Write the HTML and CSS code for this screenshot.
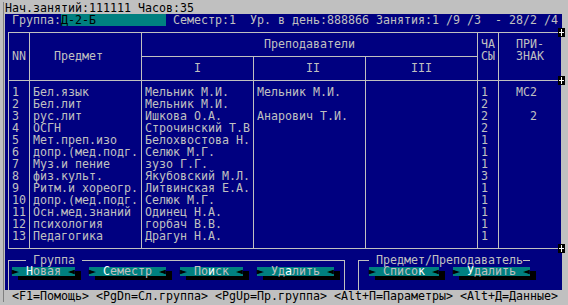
FILE: index.html
```html
<!DOCTYPE html>
<html lang="ru">
<head>
    <meta charset="UTF-8">
    <title>Группа</title>
    <link rel="stylesheet" href="styles.css">
</head>
<body>
<div class="window">
    <div class="screen">
        <div class="titlebar">Нач.занятий:111111 Часов:35</div>
        <div class="infobar"> Группа:<span class="field">Д-2-Б</span> Семестр:1  Ур. в день:888866 Занятия:1 /9 /3  - 28/2 /4</div>

        <!-- Plan table -->
        <div class="plan">
            <div class="th span-rows low">NN</div>
            <div class="th span-rows low">   Предмет</div>
            <div class="th span-cols">                 Преподаватели</div>
            <div class="th span-rows">ЧА<br>СЫ</div>
            <div class="th span-rows">  ПРИ-<br>  ЗНАК</div>
            <div class="th">       I</div>
            <div class="th">       II</div>
            <div class="th">      III</div>

            <div class="tr first"><div class="td">1</div><div class="td">Бел.язык</div><div class="td">Мельник М.И.</div><div class="td">Мельник М.И.</div><div class="td"></div><div class="td">1</div><div class="td mark">МС2</div></div>
            <div class="tr"><div class="td">2</div><div class="td">Бел.лит</div><div class="td">Мельник М.И.</div><div class="td"></div><div class="td"></div><div class="td">2</div><div class="td mark"></div></div>
            <div class="tr"><div class="td">3</div><div class="td">рус.лит</div><div class="td">Ишкова О.А.</div><div class="td">Анарович Т.И.</div><div class="td"></div><div class="td">2</div><div class="td mark">2</div></div>
            <div class="tr"><div class="td">4</div><div class="td">ОСГН</div><div class="td">Строчинский Т.В</div><div class="td"></div><div class="td"></div><div class="td">2</div><div class="td mark"></div></div>
            <div class="tr"><div class="td">5</div><div class="td">Мет.преп.изо</div><div class="td">Белохвостова Н.</div><div class="td"></div><div class="td"></div><div class="td">1</div><div class="td mark"></div></div>
            <div class="tr"><div class="td">6</div><div class="td">допр.(мед.подг.</div><div class="td">Селюк М.Г.</div><div class="td"></div><div class="td"></div><div class="td">1</div><div class="td mark"></div></div>
            <div class="tr"><div class="td">7</div><div class="td">Муз.и пение</div><div class="td">зузо Г.Г.</div><div class="td"></div><div class="td"></div><div class="td">1</div><div class="td mark"></div></div>
            <div class="tr"><div class="td">8</div><div class="td">физ.культ.</div><div class="td">Якубовский М.Л.</div><div class="td"></div><div class="td"></div><div class="td">3</div><div class="td mark"></div></div>
            <div class="tr"><div class="td">9</div><div class="td">Ритм.и хореогр.</div><div class="td">Литвинская Е.А.</div><div class="td"></div><div class="td"></div><div class="td">1</div><div class="td mark"></div></div>
            <div class="tr"><div class="td">10</div><div class="td">допр.(мед.подг.</div><div class="td">Селюк М.Г.</div><div class="td"></div><div class="td"></div><div class="td">1</div><div class="td mark"></div></div>
            <div class="tr"><div class="td">11</div><div class="td">Осн.мед.знаний</div><div class="td">Одинец Н.А.</div><div class="td"></div><div class="td"></div><div class="td">1</div><div class="td mark"></div></div>
            <div class="tr"><div class="td">12</div><div class="td">психология</div><div class="td">горбач В.В.</div><div class="td"></div><div class="td"></div><div class="td">1</div><div class="td mark"></div></div>
            <div class="tr last"><div class="td">13</div><div class="td">Педагогика</div><div class="td">Драгун Н.А.</div><div class="td"></div><div class="td"></div><div class="td">1</div><div class="td mark"></div></div>

            <span class="joint joint-top"></span>
            <span class="joint joint-mid"></span>
            <span class="joint joint-bottom"></span>
        </div>

        <!-- Button groups -->
        <div class="panels">
            <fieldset class="box box-group">
                <legend> Группа </legend>
                <div class="btn-row">
                    <button class="btn"><span class="arr">►</span> <span class="hot">Н</span>овая <span class="arr">◄</span></button>
                    <button class="btn"><span class="arr">►</span> <span class="hot">С</span>еместр <span class="arr">◄</span></button>
                    <button class="btn"><span class="arr">►</span> По<span class="hot">и</span>ск <span class="arr">◄</span></button>
                    <button class="btn"><span class="arr">►</span> Уд<span class="hot">а</span>лить <span class="arr">◄</span></button>
                </div>
            </fieldset>
            <fieldset class="box box-items">
                <legend> Предмет/Преподаватель</legend>
                <div class="btn-row">
                    <button class="btn"><span class="arr">►</span> Списо<span class="hot">к</span> <span class="arr">◄</span></button>
                    <button class="btn"><span class="arr">►</span> <span class="hot">У</span>далить <span class="arr">◄</span></button>
                </div>
            </fieldset>
        </div>

        <div class="statusbar"> &lt;F1=Помощь&gt; &lt;PgDn=Сл.группа&gt; &lt;PgUp=Пр.группа&gt; &lt;Alt+П=Параметры&gt; &lt;Alt+Д=Данные&gt;</div>
    </div>
</div>
</body>
</html>
```

FILE: styles.css
```css
* {
    margin: 0;
    padding: 0;
    box-sizing: border-box;
}
html, body {
    background-color: #c0c0c0;
}
body {
    width: 568px;
    height: 305px;
    overflow: hidden;
    font-family: "DejaVu Sans Mono", monospace;
    font-size: 11.63px;
    line-height: 12px;
}
.window {
    padding: 2px 6px 3px 3px;
}
.screen {
    height: 300px;
    background-color: #000080;
    color: #c0c0c0;
    border-left: 1px solid #808080;
    box-shadow: inset 1px 0 #c0c0c0;
    padding-left: 1px;
}
.titlebar,
.statusbar {
    height: 12px;
    background-color: #c0c0c0;
    color: #000;
    white-space: pre;
}
.infobar {
    height: 12px;
    white-space: pre;
}
.field {
    display: inline-block;
    width: 105px;
    background-color: #008080;
    color: #000;
}

/* table */
.plan {
    position: relative;
    display: grid;
    grid-template-columns: 21px 112px 112px 112px 112px 21px 63px;
    grid-template-rows: 24px 24px;
    width: 554px;
    margin: 6px 0 5px 3px;
    border: 1px solid #c0c0c0;
    border-left: none;
}
.th,
.td {
    border-left: 1px solid #c0c0c0;
    padding-left: 3px;
    white-space: pre;
}
.th {
    padding-top: 5px;
    border-bottom: 1px solid #c0c0c0;
}
.th.low {
    padding-top: 17px;
}
.span-rows {
    grid-row: span 2;
}
.span-cols {
    grid-column: span 3;
}
.tr {
    display: contents;
}
.tr.first .td {
    padding-top: 5px;
}
.tr.last .td {
    padding-bottom: 6px;
}
.td.mark {
    text-align: right;
    padding-right: 24px;
}
.joint {
    position: absolute;
    right: -4px;
    width: 7px;
    height: 9px;
    background-color: #000;
}
.joint::before,
.joint::after {
    content: "";
    position: absolute;
    background-color: #fff;
}
.joint::before {
    left: 1px;
    right: 1px;
    top: 4px;
    height: 1px;
}
.joint::after {
    left: 3px;
    top: 1px;
    bottom: 1px;
    width: 1px;
}
.joint-top {
    top: -5px;
}
.joint-mid {
    top: 43px;
}
.joint-bottom {
    top: 211px;
}

/* group boxes */
.panels {
    display: flex;
    height: 36px;
}
.box {
    height: 36px;
    margin: 0;
    padding: 0;
    min-width: 0;
    border: 1px solid #c0c0c0;
    border-bottom: none;
}
.box legend {
    padding: 0;
    line-height: 12px;
    white-space: pre;
    color: #c0c0c0;
}
.box-group {
    width: 337px;
    margin-left: 3px;
}
.box-group legend {
    margin-left: 17px;
}
.box-items {
    width: 172px;
    margin-left: 13px;
    border-right: none;
}
.box-items legend {
    margin-left: 10px;
}
.btn-row {
    display: flex;
    gap: 14px;
    padding-top: 1px;
}
.box-group .btn-row {
    padding-left: 3px;
}
.box-items .btn-row {
    padding-left: 10px;
}
.btn {
    height: 9px;
    border: none;
    padding: 0;
    font: inherit;
    line-height: 9px;
    white-space: pre;
    background-color: #008080;
    color: #c0c0c0;
    box-shadow: 6px 4px 0 #000;
}
.btn .arr {
    color: #000;
}
.btn .hot {
    color: #fff;
}
```
